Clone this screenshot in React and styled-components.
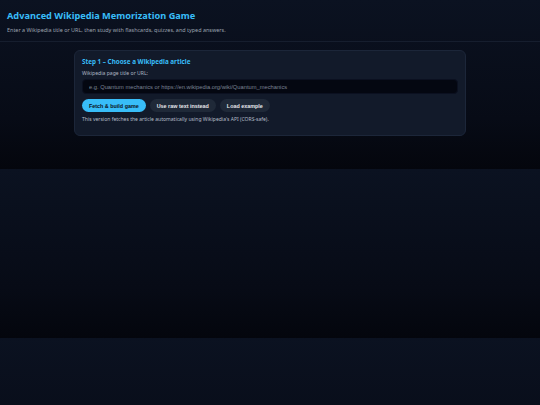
import React, { useState } from 'react';
import styled, { createGlobalStyle } from 'styled-components';

const GlobalStyle = createGlobalStyle`
  body {
    margin: 0;
    font-family: "Noto Sans", "Open Sans", sans-serif;
    color: #e5e7eb;
    background: linear-gradient(180deg, #0b1221 0%, #070b16 70%, #04060d 100%);
  }
  * { box-sizing: border-box; }
`;

const Header = styled.header`
  padding: 9px 7px 7px;
  border-bottom: 1px solid #161e2e;
`;

const Title = styled.h1`
  margin: 0;
  font-size: 9.2px;
  line-height: 13px;
  font-weight: 700;
  color: #38bdf8;
`;

const Subtitle = styled.p`
  margin: 4px 0 0;
  font-size: 5.45px;
  line-height: 8px;
  color: #9ca3af;
`;

const Main = styled.main`
  max-width: 392px;
  margin: 0 auto;
  padding: 8px 0 33px;
`;

const Card = styled.section`
  background: #121a2a;
  border: 1px solid #1c2639;
  border-radius: 6px;
  padding: 6px 7px 12px;
`;

const StepTitle = styled.h2`
  margin: 0 0 3px;
  font-size: 6.3px;
  line-height: 9px;
  font-weight: 700;
  color: #38bdf8;
`;

const Label = styled.label`
  display: block;
  font-size: 5.1px;
  line-height: 8px;
  color: #aeb6c4;
  margin-bottom: 2px;
`;

const Input = styled.input`
  display: block;
  width: 100%;
  height: 15px;
  padding: 0 6px;
  border: 1px solid #0b1020;
  border-radius: 4px;
  background: #040711;
  color: #e5e7eb;
  font-family: "Liberation Sans", Arial, sans-serif;
  font-size: 5.75px;
  outline: none;

  &::placeholder {
    color: #7b8494;
  }
`;

const ButtonRow = styled.div`
  display: flex;
  gap: 4px;
  margin-top: 5px;
`;

const Button = styled.button`
  height: 13px;
  padding: 0 7px;
  border: none;
  border-radius: 7px;
  font-family: "Liberation Sans", Arial, sans-serif;
  font-size: 5.4px;
  font-weight: 700;
  cursor: pointer;
  background: ${p => (p.$primary ? '#38bdf8' : '#1f2938')};
  color: ${p => (p.$primary ? '#0b1120' : '#e5e7eb')};
`;

const Note = styled.p`
  margin: 3px 0 0;
  font-size: 5.05px;
  line-height: 8px;
  color: #b4bcc8;
`;

export default function App() {
  const [query, setQuery] = useState('');

  return (
    <>
      <GlobalStyle />
      <Header>
        <Title>Advanced Wikipedia Memorization Game</Title>
        <Subtitle>
          Enter a Wikipedia title or URL, then study with flashcards, quizzes, and typed answers.
        </Subtitle>
      </Header>
      <Main>
        <Card>
          <StepTitle>Step 1 – Choose a Wikipedia article</StepTitle>
          <Label htmlFor="article">Wikipedia page title or URL:</Label>
          <Input
            id="article"
            value={query}
            onChange={e => setQuery(e.target.value)}
            placeholder="e.g. Quantum mechanics or https://en.wikipedia.org/wiki/Quantum_mechanics"
          />
          <ButtonRow>
            <Button $primary>Fetch &amp; build game</Button>
            <Button>Use raw text instead</Button>
            <Button onClick={() => setQuery('Quantum mechanics')}>Load example</Button>
          </ButtonRow>
          <Note>
            This version fetches the article automatically using Wikipedia's API (CORS-safe).
          </Note>
        </Card>
      </Main>
    </>
  );
}
